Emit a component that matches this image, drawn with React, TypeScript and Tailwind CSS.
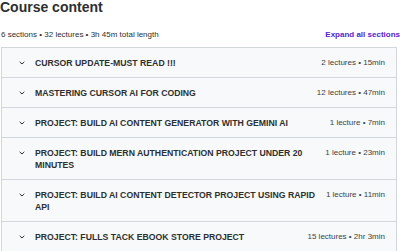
import React from "react";

const sections = [
  { title: "CURSOR UPDATE-MUST READ !!!", meta: "2 lectures • 15min" },
  { title: "MASTERING CURSOR AI FOR CODING", meta: "12 lectures • 47min" },
  { title: "PROJECT: BUILD AI CONTENT GENERATOR WITH GEMINI AI", meta: "1 lecture • 7min" },
  { title: "PROJECT: BUILD MERN AUTHENTICATION PROJECT UNDER 20 MINUTES", meta: "1 lecture • 23min" },
  { title: "PROJECT: BUILD AI CONTENT DETECTOR PROJECT USING RAPID API", meta: "1 lecture • 11min" },
  { title: "PROJECT: FULLS TACK EBOOK STORE PROJECT", meta: "15 lectures • 2hr 3min" },
];

const Chevron = () => (
  <svg width="6" height="4" viewBox="0 0 6 4" className="shrink-0 mt-[-1px]">
    <polyline points="0.7,0.8 3,3 5.3,0.8" fill="none" stroke="#2d2f31" strokeWidth="1" />
  </svg>
);

const App = () => {
  return (
    <div
      className="w-[400px] h-[251px] overflow-hidden bg-white text-[#2d2f31]"
      style={{ fontFamily: '"Liberation Sans", Arial, sans-serif' }}
    >
      {/* Header */}
      <h2 className="text-[14px] leading-[14px] font-bold">Course content</h2>
      <div className="mt-[16px] flex items-center justify-between">
        <span className="text-[8px] leading-[10px] pl-[1px]">
          6 sections • 32 lectures • 3h 45m total length
        </span>
        <button className="text-[8px] leading-[10px] font-bold text-[#5624d0]">
          Expand all sections
        </button>
      </div>

      {/* Sections */}
      <div className="mt-[7px] ml-[1px] w-[396px] border border-[#d1d7dc]">
        {sections.map((s, i) => (
          <div
            key={i}
            className={`flex items-start bg-[#f7f9fa] pl-[17px] pr-[11px] pt-[9px] pb-[8px] ${
              i < sections.length - 1 ? "border-b border-[#d1d7dc]" : ""
            }`}
          >
            <div className="h-[12px] flex items-center">
              <Chevron />
            </div>
            <div className="flex-1 ml-[10px] text-[8.7px] leading-[12px] font-bold">
              {s.title}
            </div>
            <div className="ml-[10px] shrink-0 text-[8px] leading-[12px] text-[#3e4143]">
              {s.meta}
            </div>
          </div>
        ))}
      </div>
    </div>
  );
};

export default App;
